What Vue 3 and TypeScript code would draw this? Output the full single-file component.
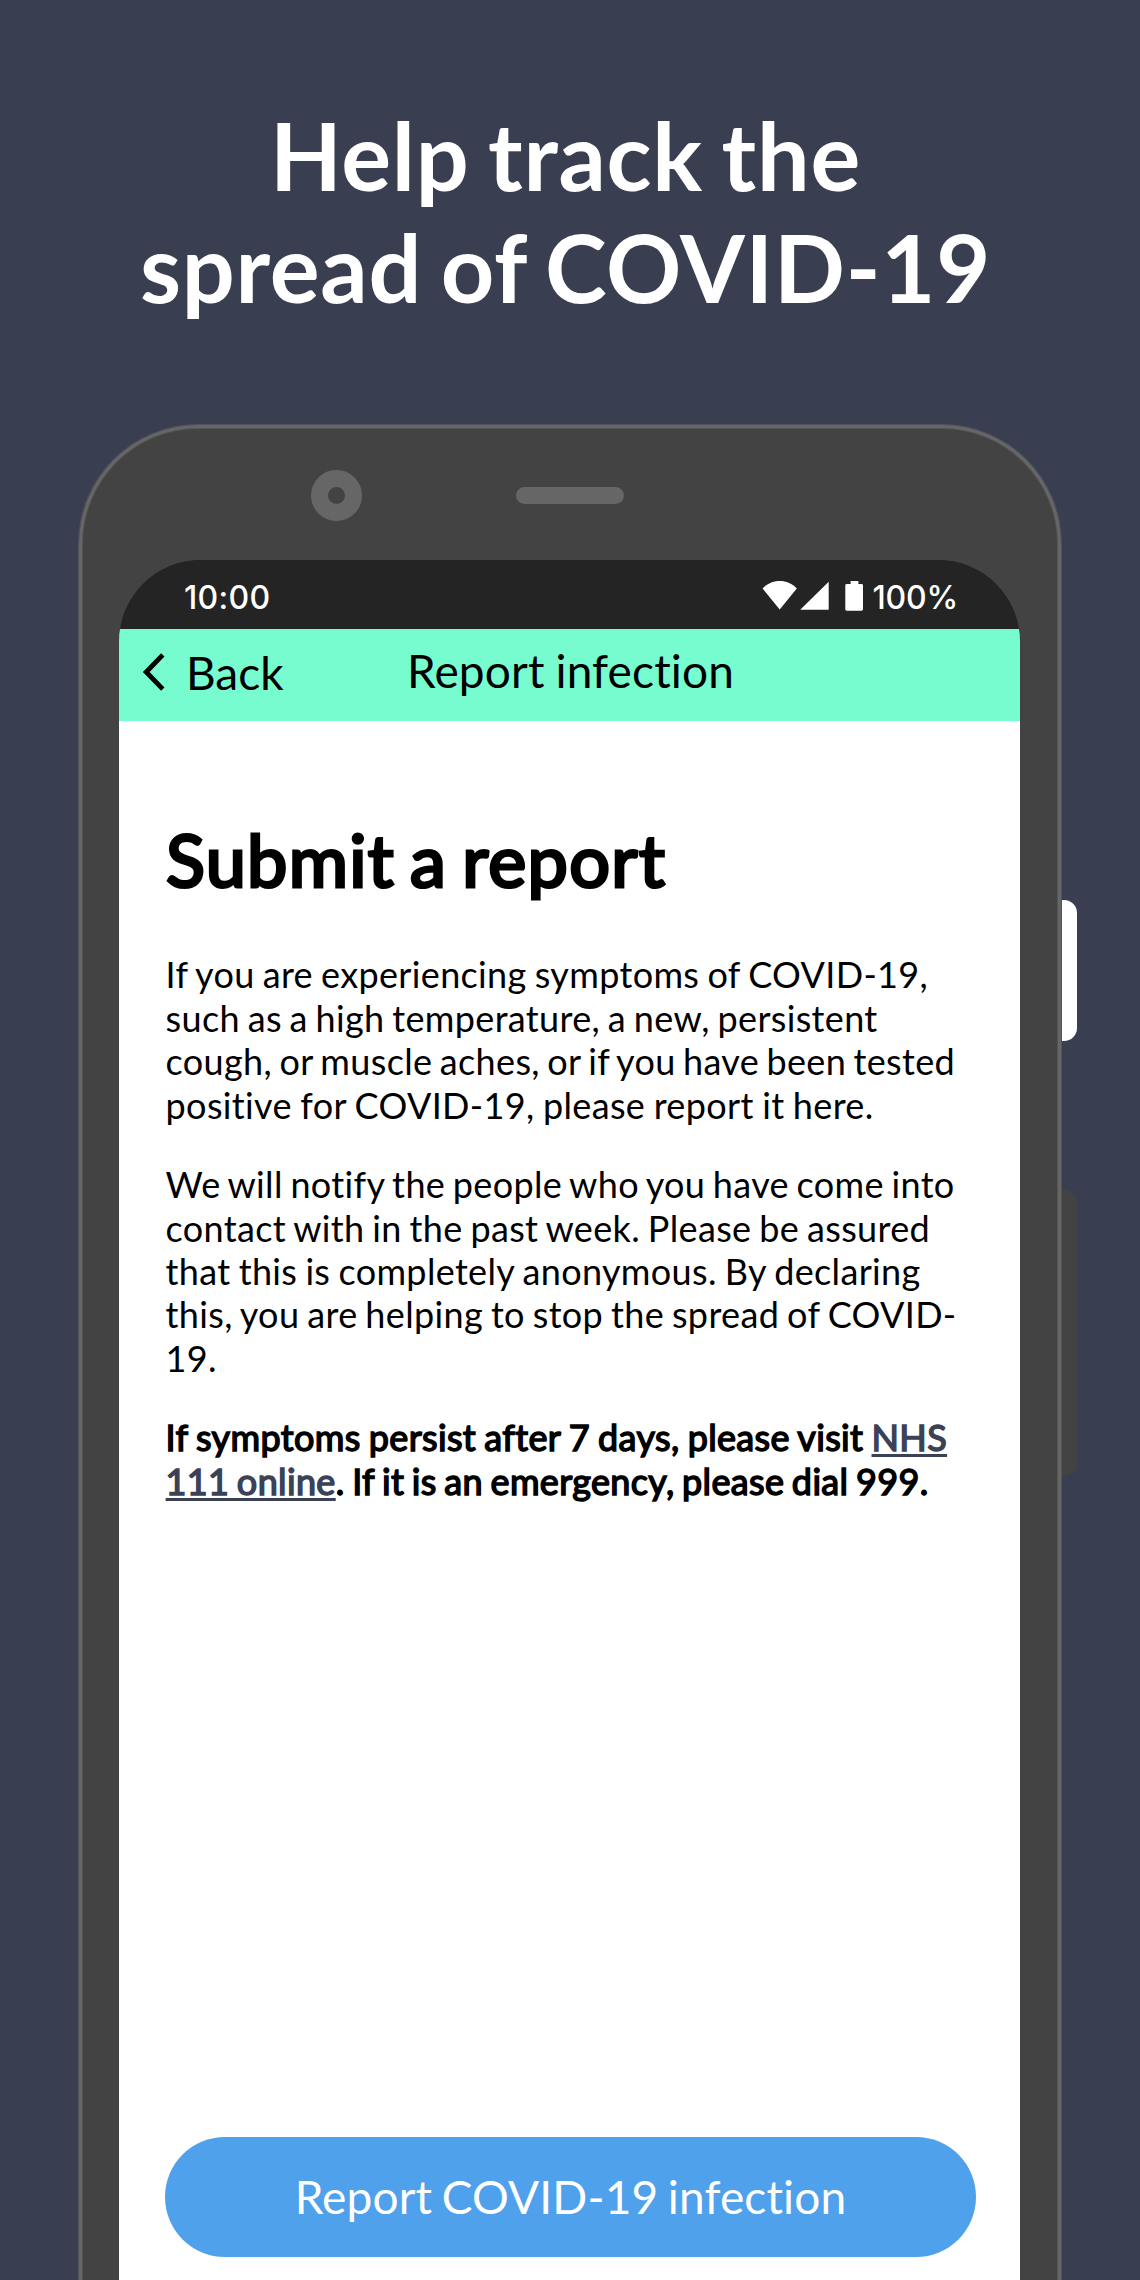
<script setup lang="ts">
interface Line {
  text: string
  width?: number
}

const headline: string[] = ['Help track the', 'spread of COVID-19']

// Each line is set to its own measure so the right edge keeps its rag.
const paragraphs: Line[][] = [
  [
    { text: 'If you are experiencing symptoms of COVID-19,', width: 762.5 },
    { text: 'such as a high temperature, a new, persistent', width: 712 },
    { text: 'cough, or muscle aches, or if you have been tested', width: 789.5 },
    { text: 'positive for COVID-19, please report it here.', width: 708 },
  ],
  [
    { text: 'We will notify the people who you have come into', width: 789 },
    { text: 'contact with in the past week. Please be assured', width: 764.5 },
    { text: 'that this is completely anonymous. By declaring', width: 755 },
    { text: 'this, you are helping to stop the spread of COVID-', width: 791 },
    { text: '19.' },
  ],
]

const measure = (line: Line) => (line.width ? { width: line.width + 'px' } : {})
</script>

<template>
  <main class="promo">
    <h1 class="headline">
      <span v-for="line in headline" :key="line">{{ line }}</span>
    </h1>

    <div class="device">
      <i class="key key-power"></i>
      <i class="key key-volume"></i>

      <div class="bezel">
        <i class="camera"></i>
        <i class="speaker"></i>
      </div>

      <div class="screen">
        <div class="status">
          <span class="clock">10:00</span>
          <svg class="status-icons" width="102" height="32" viewBox="0 0 102 32" fill="#fff">
            <path d="M0.6 8.6C5 3.6 11.200 1 17.700 1s12.700 2.600 17.100 7.600L17.700 29.600z" />
            <path d="M66.700 1.800V29.700H38.200z" />
            <path d="M88.600 1h7.800v3h3.200a1.400 1.400 0 0 1 1.400 1.400v23.900a1.400 1.400 0 0 1-1.400 1.400h-14.900a1.400 1.400 0 0 1-1.400-1.400V5.400a1.400 1.400 0 0 1 1.400-1.400h3.900z" />
          </svg>
          <span class="battery">100%</span>
        </div>

        <header class="navbar">
          <a class="back">
            <svg width="24" height="40" viewBox="0 0 24 40" fill="none" stroke="#000" stroke-width="4.800">
              <path d="M20.800 2.800L4.200 20L20.800 37.200" />
            </svg>
            <span>Back</span>
          </a>
          <span class="title">Report infection</span>
        </header>

        <section class="content">
          <h2>Submit a report</h2>
          <p v-for="(lines, i) in paragraphs" :key="i">
            <span
              v-for="line in lines"
              :key="line.text"
              class="line"
              :class="{ set: line.width }"
              :style="measure(line)"
            >{{ line.text }}</span>
          </p>
          <p class="strong">
            <span class="line set first">If symptoms persist after 7 days, please visit <a>NHS</a></span>
            <span class="line set second"><a>111 online</a>. If it is an emergency, please dial 999.</span>
          </p>
          <button type="button">Report COVID-19 infection</button>
        </section>
      </div>
    </div>
  </main>
</template>

<style>
body {
  background: #393e51;
}
</style>

<style scoped>
.promo {
  box-sizing: border-box;
  width: 1140px;
  height: 2280px;
  padding-top: 99px;
  overflow: hidden;
  background: #393e51;
  font-family: Lato, sans-serif;
  font-variant-ligatures: none;
  display: flex;
  flex-direction: column;
}
.headline {
  margin: 0 0 101px;
  padding-right: 9px;
  color: #fff;
  font-size: 93.33px;
  font-weight: 700;
  line-height: 112px;
  letter-spacing: 0.750px;
  word-spacing: -4.800px;
  text-align: center;
}
.headline span {
  display: block;
}
.device {
  position: relative;
  box-sizing: border-box;
  flex: 1;
  width: 984px;
  margin: 0 0 -5px 78px;
  padding: 0 41px 0 40px;
  border: 1px solid #50535b;
  border-bottom: 0;
  border-radius: 120px 120px 0 0;
  background: #434343;
  box-shadow: inset 0 0 0 3px #666, inset 0 0 0 4px #545454;
  display: flex;
  flex-direction: column;
}
.key {
  position: absolute;
  left: 983px;
  width: 15px;
  border-radius: 0 13px 13px 0;
}
.key-power {
  top: 475px;
  height: 141px;
  background: #fff;
}
.key-volume {
  top: 765px;
  height: 286px;
  background: #434343;
}
.bezel {
  box-sizing: border-box;
  height: 135px;
  padding: 45px 0 39px 192px;
  display: flex;
  align-items: center;
}
.camera {
  box-sizing: border-box;
  width: 51px;
  height: 51px;
  border: 17px solid #666;
  border-radius: 50%;
}
.speaker {
  width: 108px;
  height: 17px;
  margin-left: 154px;
  border-radius: 9px;
  background: #666;
}
.screen {
  flex: 1;
  border-radius: 82px 82px 0 0;
  overflow: hidden;
  background: linear-gradient(#242424 60px, #fff 100px);
  display: flex;
  flex-direction: column;
}
.status {
  box-sizing: border-box;
  height: 69px;
  padding: 18px 62px 0 65px;
  background: #242424;
  color: #fff;
  font: 500 32px/39px Inter, sans-serif;
  display: flex;
  align-items: flex-start;
}
.clock {
  letter-spacing: 0.300px;
}
.battery {
  letter-spacing: -0.200px;
}
.status-icons {
  margin: 2px 8px 0 auto;
}
.navbar {
  box-sizing: border-box;
  height: 92px;
  background: #77fcd0;
  color: #000;
  font-size: 46px;
  line-height: 55px;
  display: grid;
  grid-template-columns: 1fr auto 1fr;
  align-items: start;
  padding: 14px 0 0 2px;
}
.title {
  letter-spacing: 0.150px;
  word-spacing: -1px;
}
.back {
  display: flex;
  padding: 1px 0 0 21px;
}
.back svg {
  margin-top: 8px;
}
.back span {
  margin: 1px 0 0 20px;
}
.content {
  flex: 1;
  padding: 95px 44px 28px 46px;
  color: #000;
  display: flex;
  flex-direction: column;
}
h2 {
  width: 500px;
  margin: 0 0 51.300px 1px;
  font-size: 72px;
  line-height: 86px;
  font-weight: 400;
  letter-spacing: 1.300px;
  word-spacing: -12px;
  white-space: nowrap;
  text-align-last: justify;
  -webkit-text-stroke: 3.200px #000;
}
p {
  margin: 0 0 36.200px 0.600px;
  font-size: 36px;
  line-height: 43.400px;
}
.line {
  display: block;
  white-space: nowrap;
  letter-spacing: 0.350px;
}
.set {
  word-spacing: -5px;
  text-align-last: justify;
}
.first {
  width: 781.500px;
}
.second {
  width: 763px;
}
.strong {
  -webkit-text-stroke: 1.500px currentColor;
}
.strong a {
  color: #3b4156;
  -webkit-text-stroke-color: #3b4156;
  text-decoration: underline;
  text-decoration-thickness: 3px;
  text-underline-offset: 3px;
  text-decoration-skip-ink: none;
}
button {
  height: 120px;
  margin-top: auto;
  padding: 0 0 2px;
  border: 0;
  border-radius: 60px;
  background: #50a1ec;
  color: #fff;
  font: 400 46px/55px Lato, sans-serif;
  font-variant-ligatures: none;
  letter-spacing: 0.150px;
  word-spacing: -2.500px;
}
</style>
